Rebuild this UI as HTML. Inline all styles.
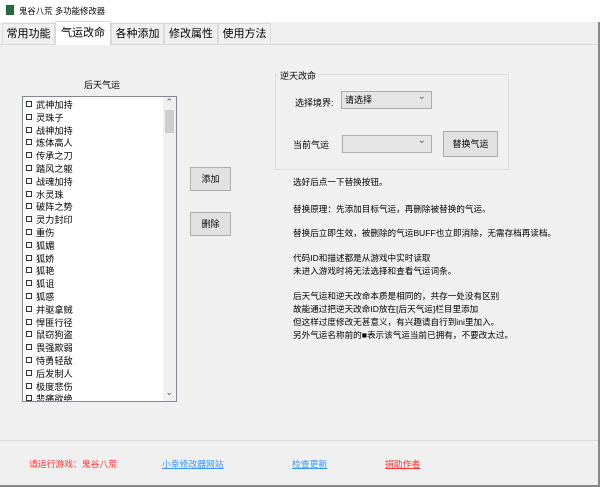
<html><head><style>
*{margin:0;padding:0;box-sizing:border-box}
body{width:600px;height:487px;background:#f0f0f0;font-family:"Liberation Sans","Noto Sans CJK SC",sans-serif;font-size:8.6px;color:#000;position:relative;overflow:hidden}
.a{position:absolute;white-space:nowrap}
.tab{position:absolute;top:23px;height:21px;font-size:11px;line-height:21px;text-align:center;border:1px solid #d9d9d9;border-bottom:none;background:#f0f0f0}
.btn{position:absolute;background:#e1e1e1;border:1px solid #adadad;text-align:center;font-size:9px}
.cb{position:absolute;background:#e5e5e5;border:1px solid #adadad;height:18px;line-height:16px;padding-left:3px;font-size:9px}
.cb:after{content:"⌄";position:absolute;right:5px;top:-3px;color:#666;font-size:10px}
ul{list-style:none}
li{height:12.8px;line-height:12.8px;padding-left:3px;font-size:9.2px}
li:before{content:"";display:inline-block;width:4px;height:4px;border:1px solid #333;margin-right:4px;vertical-align:1px}
</style></head><body>
<div class="a" style="left:0;top:0;width:600px;height:22px;background:#fff"></div>
<div class="a" style="left:6px;top:5px;width:8px;height:10px;background:#2e6b3a;border:1px solid #164"></div>
<div class="a" style="left:19px;top:5px;font-size:8.4px">鬼谷八荒 多功能修改器</div>
<div class="a" style="left:0;top:44px;width:600px;height:1px;background:#d9d9d9"></div>
<div class="tab" style="left:2px;width:53px">常用功能</div>
<div class="tab" style="left:55px;width:56px;top:21px;height:24px;background:#fff;line-height:22px">气运改命</div>
<div class="tab" style="left:111px;width:53px">各种添加</div>
<div class="tab" style="left:164px;width:54px">修改属性</div>
<div class="tab" style="left:218px;width:53px">使用方法</div>
<div class="a" style="left:84px;top:78px;font-size:9px">后天气运</div>
<div class="a" style="left:22px;top:96px;width:155px;height:306px;background:#fff;border:1px solid #828790;overflow:hidden">
<ul style="padding-top:2px">
<li>武神加持</li><li>灵珠子</li><li>战神加持</li><li>炼体高人</li><li>传承之刀</li><li>踏风之躯</li><li>战魂加持</li><li>水灵珠</li><li>破阵之势</li><li>灵力封印</li><li>重伤</li><li>狐媚</li><li>狐娇</li><li>狐艳</li><li>狐诅</li><li>狐惑</li><li>并驱拿贼</li><li>悍匪行径</li><li>鼠窃狗盗</li><li>畏强欺弱</li><li>恃勇轻敌</li><li>后发制人</li><li>极度悲伤</li><li>悲痛欲绝</li></ul>
<div class="a" style="right:0;top:0;width:13px;height:304px;background:#f0f0f0"></div>
<div class="a" style="right:3px;top:0px;font-size:9px;color:#555">⌃</div>
<div class="a" style="right:2px;top:13px;width:9px;height:23px;background:#cdcdcd"></div>
<div class="a" style="right:3px;top:290px;font-size:9px;color:#555">⌄</div>
</div>
<div class="btn" style="left:190px;top:167px;width:41px;height:24px;line-height:22px">添加</div>
<div class="btn" style="left:190px;top:212px;width:41px;height:24px;line-height:22px">删除</div>
<div class="a" style="left:275px;top:74px;width:234px;height:96px;border:1px solid #dcdcdc"></div>
<div class="a" style="left:278px;top:69px;background:#f0f0f0;padding:0 2px;font-size:9px">逆天改命</div>
<div class="a" style="left:295px;top:96px;font-size:9px">选择境界:</div>
<div class="cb" style="left:341px;top:91px;width:91px">请选择</div>
<div class="a" style="left:293px;top:138px;font-size:9px">当前气运</div>
<div class="cb" style="left:342px;top:135px;width:90px"></div>
<div class="btn" style="left:443px;top:131px;width:55px;height:26px;line-height:24px">替换气运</div>
<div class="a" style="left:293px;top:176px">选好后点一下替换按钮。</div>
<div class="a" style="left:293px;top:203px">替换原理：先添加目标气运，再删除被替换的气运。</div>
<div class="a" style="left:293px;top:227px">替换后立即生效，被删除的气运BUFF也立即消除，无需存档再读档。</div>
<div class="a" style="left:293px;top:252px;line-height:13px">代码ID和描述都是从游戏中实时读取<br>未进入游戏时将无法选择和查看气运词条。</div>
<div class="a" style="left:293px;top:290px;line-height:13px">后天气运和逆天改命本质是相同的，共存一处没有区别<br>故能通过把逆天改命ID放在[后天气运]栏目里添加<br>但这样过度修改无甚意义，有兴趣请自行到ini里加入。<br>另外气运名称前的■表示该气运当前已拥有，不要改太过。</div>
<div class="a" style="left:0;top:440px;width:600px;height:1px;background:#dcdcdc"></div>
<div class="a" style="left:29px;top:457px;color:#f33;font-size:8.8px">请运行游戏：鬼谷八荒</div>
<div class="a" style="left:162px;top:457px;color:#39f;text-decoration:underline;font-size:8.8px">小幸修改器网站</div>
<div class="a" style="left:292px;top:457px;color:#39f;text-decoration:underline;font-size:8.8px">检查更新</div>
<div class="a" style="left:385px;top:457px;color:#f33;text-decoration:underline;font-size:8.8px">捐助作者</div>
<div class="a" style="left:598px;top:22px;width:2px;height:465px;background:#888"></div>
<div class="a" style="left:0;top:485px;width:600px;height:2px;background:#888"></div>
</body></html>
